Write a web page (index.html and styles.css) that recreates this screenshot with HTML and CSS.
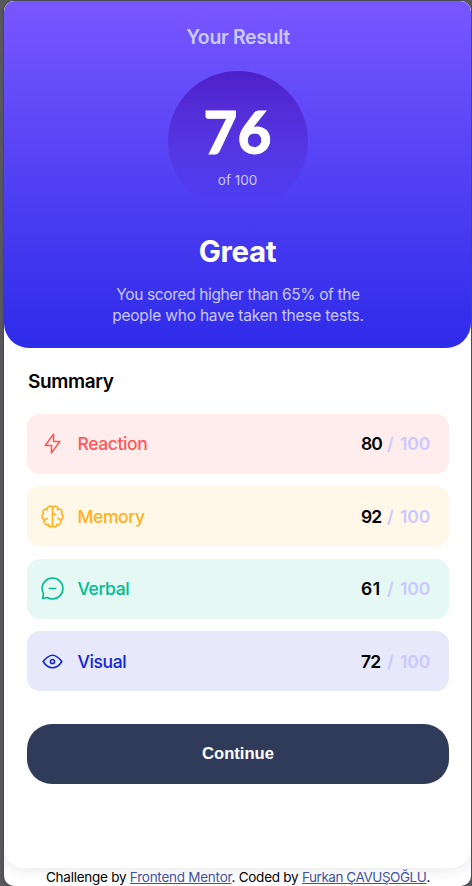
FILE: index.html
```html
<!DOCTYPE html>
<html lang="en">
<head>
<meta charset="utf-8">
<title>Results summary</title>
<link rel="stylesheet" href="styles.css">
</head>
<body>
<main class="page">
  <div class="card">
    <section class="result">
      <h1 class="result-title">Your Result</h1>
      <div class="circle">
        <span class="score">76</span>
        <span class="of">of 100</span>
      </div>
      <h2 class="grade">Great</h2>
      <p class="text"><span class="line-one">You scored higher than 65% of the</span><br>people who have taken these tests.</p>
    </section>
    <section class="summary">
      <h2 class="summary-title">Summary</h2>
      <ul class="list">
        <li class="row reaction">
          <svg class="icon" viewBox="0 0 20 20"><path d="M10.833 8.333V2.5l-6.666 9.167h5V17.5l6.666-9.167h-5Z"/></svg>
          <span class="label">Reaction</span>
          <span class="value"><b>80</b><span class="slash">/</span><span class="max">100</span></span>
        </li>
        <li class="row memory">
          <svg class="icon" viewBox="0 0 20 20"><path d="M5.833 11.667a2.5 2.5 0 1 0 .834 4.858"/><path d="M3.553 13.004a3.333 3.333 0 0 1-.728-5.53m.025-.067a2.083 2.083 0 0 1 2.983-2.824m.199.054A2.083 2.083 0 1 1 10 3.75v12.917a1.667 1.667 0 0 1-3.333 0M10 5.833a2.5 2.5 0 0 0 2.5 2.5m1.667 3.334a2.5 2.5 0 1 1-.834 4.858"/><path d="M16.447 13.004a3.334 3.334 0 0 0 .728-5.53m-.025-.067a2.083 2.083 0 0 0-2.983-2.824M10 3.75a2.085 2.085 0 0 1 2.538-2.033 2.084 2.084 0 0 1 1.43 2.92m-.635 12.03a1.667 1.667 0 0 1-3.333 0"/></svg>
          <span class="label">Memory</span>
          <span class="value"><b>92</b><span class="slash">/</span><span class="max">100</span></span>
        </li>
        <li class="row verbal">
          <svg class="icon" viewBox="0 0 20 20"><path d="M7.5 10h5M10 18.333A8.333 8.333 0 1 0 1.667 10c0 1.518.406 2.942 1.115 4.167l-.699 3.75 3.75-.699A8.295 8.295 0 0 0 10 18.333Z"/></svg>
          <span class="label">Verbal</span>
          <span class="value"><b>61</b><span class="slash">/</span><span class="max">100</span></span>
        </li>
        <li class="row visual">
          <svg class="icon" viewBox="0 0 20 20"><path d="M10 11.667a1.667 1.667 0 1 0 0-3.334 1.667 1.667 0 0 0 0 3.334Z"/><path d="M17.5 10c-1.574 2.492-4.402 5-7.5 5s-5.926-2.508-7.5-5C4.416 7.632 6.66 5 10 5s5.584 2.632 7.5 5Z"/></svg>
          <span class="label">Visual</span>
          <span class="value"><b>72</b><span class="slash">/</span><span class="max">100</span></span>
        </li>
      </ul>
      <button class="continue">Continue</button>
    </section>
  </div>
  <footer class="attribution">Challenge by <a href="#">Frontend Mentor</a>. Coded by <a href="#" class="author">Furkan ÇAVUŞOĞLU</a>.</footer>
</main>
</body>
</html>
```
FILE: styles.css
```css
* { box-sizing: border-box; margin: 0; padding: 0; }
body {
  height: 886px;
  overflow: hidden;
  padding: 1px 1px 0 4px;
  background: #59585d;
  font-family: Inter, "Liberation Sans", sans-serif;
}
.page {
  height: 885px;
  border-radius: 10px;
  background: #fff;
  overflow: hidden;
  box-shadow: 0 0 3px rgba(0, 0, 0, .4);
}
.card {
  height: 867px;
  border-radius: 10px 10px 20px 20px;
  background: #fff;
  box-shadow: 0 0 15px rgba(0, 0, 0, .12);
}
.result {
  height: 347px;
  padding-top: 23px;
  display: flex;
  flex-direction: column;
  align-items: center;
  border-radius: 10px 10px 25px 25px;
  background: linear-gradient(#7857ff, #2e2be9);
  text-align: center;
}
.result-title {
  height: 24px;
  padding-left: 1px;
  font-size: 19.5px;
  line-height: 26px;
  font-weight: 600;
  letter-spacing: -.35px;
  color: #cac9ff;
}
.circle {
  width: 140px;
  height: 140px;
  margin-top: 23px;
  padding-top: 30px;
  display: flex;
  flex-direction: column;
  align-items: center;
  border-radius: 50%;
  background: linear-gradient(#4d21c9, rgba(37, 33, 201, 0) 95%);
}
.score {
  font-family: Lato, sans-serif;
  font-size: 58.5px;
  line-height: 61px;
  font-weight: 900;
  color: #fff;
  -webkit-text-stroke: .8px #fff;
}
.of {
  margin-top: 9px;
  font-size: 13.5px;
  line-height: 18px;
  color: #cac9ff;
}
.grade {
  margin-top: 22px;
  font-size: 29.5px;
  line-height: 36px;
  font-weight: 700;
  letter-spacing: -.3px;
  color: #fff;
}
.text {
  margin-top: 15px;
  padding-left: 1px;
  font-size: 15.5px;
  line-height: 21px;
  letter-spacing: -.2px;
  color: #cac9ff;
}
.line-one { letter-spacing: -.37px; }
.summary { padding: 22px 22px 0 23px; }
.summary-title {
  padding-left: 1px;
  font-size: 19px;
  line-height: 24px;
  font-weight: 600;
  letter-spacing: -.35px;
  color: #000;
}
.list {
  margin-top: 20px;
  display: grid;
  gap: 12.4px;
  list-style: none;
}
.row {
  height: 60px;
  padding: 0 19px 0 13px;
  display: flex;
  align-items: center;
  border-radius: 13px;
  font-size: 17.5px;
  line-height: 22px;
  font-weight: 500;
}
.row.reaction { padding-bottom: 1px; }
.memory .label, .memory .value,
.visual .label, .visual .value { padding-top: 2px; }
.icon {
  width: 25px;
  height: 25px;
  fill: none;
  stroke: currentColor;
  stroke-width: 1.25;
  stroke-linecap: round;
  stroke-linejoin: round;
}
.label { margin-left: 12.5px; letter-spacing: -.4px; }
.value {
  margin-left: auto;
  display: grid;
  grid-template-columns: 26px 13px 30px;
  color: #000;
  font-weight: 600;
}
.value b { font-weight: 600; letter-spacing: -.9px; }
.verbal b { letter-spacing: .6px; }
.slash, .max { color: #cac9ff; letter-spacing: -.2px; }
.max { justify-self: end; }
.reaction { color: #ff5757; background: #ffeded; }
.memory { color: #ffb01f; background: #fff7e8; }
.verbal { color: #00bd91; background: #e5f8f4; }
.visual { color: #1125d4; background: #e7e8fa; }
.continue {
  display: block;
  width: 100%;
  height: 60px;
  margin-top: 33px;
  border: 0;
  border-radius: 25px;
  background: #303b59;
  color: #fff;
  font: bold 16.6px "Liberation Sans", sans-serif;
}
.attribution {
  height: 18px;
  padding-left: 1px;
  font-size: 13.5px;
  line-height: 19px;
  letter-spacing: -.25px;
  text-align: center;
  color: #000;
  white-space: nowrap;
}
.attribution a { color: #3e52a3; }
.attribution .author { letter-spacing: -.45px; }
```
